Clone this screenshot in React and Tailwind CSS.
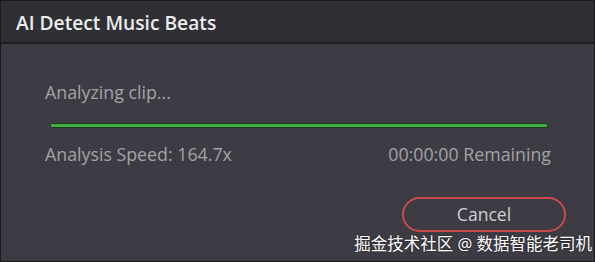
export default function App() {
  return (
    <div
      className="relative w-[595px] h-[262px] bg-[#1b1b1e] overflow-hidden"
      style={{ fontFamily: '"Open Sans", "Noto Sans CJK SC", sans-serif' }}
    >
      <div className="flex flex-col h-[260px] w-[593px] ml-[1px] mt-[1px]">
        <div className="h-[43px] bg-[#2f3036] flex items-center pl-[15px] pt-[3px] border-b-2 border-[#1e1e21]">
          <h1 className="text-[19.2px] font-semibold text-[#ececec]">AI Detect Music Beats</h1>
        </div>
        <div className="flex-1 bg-[#3d3c44] flex flex-col pl-[44px] pr-[43px]">
          <p className="mt-[37px] text-[17.8px] text-[#a3a3a6] leading-[22px]">Analyzing clip...</p>
          <div className="mt-[20px] ml-[5px] mr-[3px] h-[5px] bg-[#3fae3f] border border-[#1d3b1d] rounded-[1px]" />
          <div className="mt-[15px] flex justify-between text-[17.8px] text-[#a3a3a6] leading-[22px]">
            <span>Analysis Speed: 164.7x</span>
            <span>00:00:00 Remaining</span>
          </div>
          <div className="mt-[32px] flex justify-end">
            <button className="w-[164px] h-[35px] rounded-full border-2 border-[#c84a4a] text-[17.6px] text-[#cfcfd1] -mr-[15px]">
              Cancel
            </button>
          </div>
        </div>
      </div>
      <div className="absolute right-[3px] bottom-[7px] text-[16.5px] text-white leading-[22px] [text-shadow:0_0_2px_rgba(0,0,0,0.6)]">
        掘金技术社区 @ 数据智能老司机
      </div>
    </div>
  );
}
